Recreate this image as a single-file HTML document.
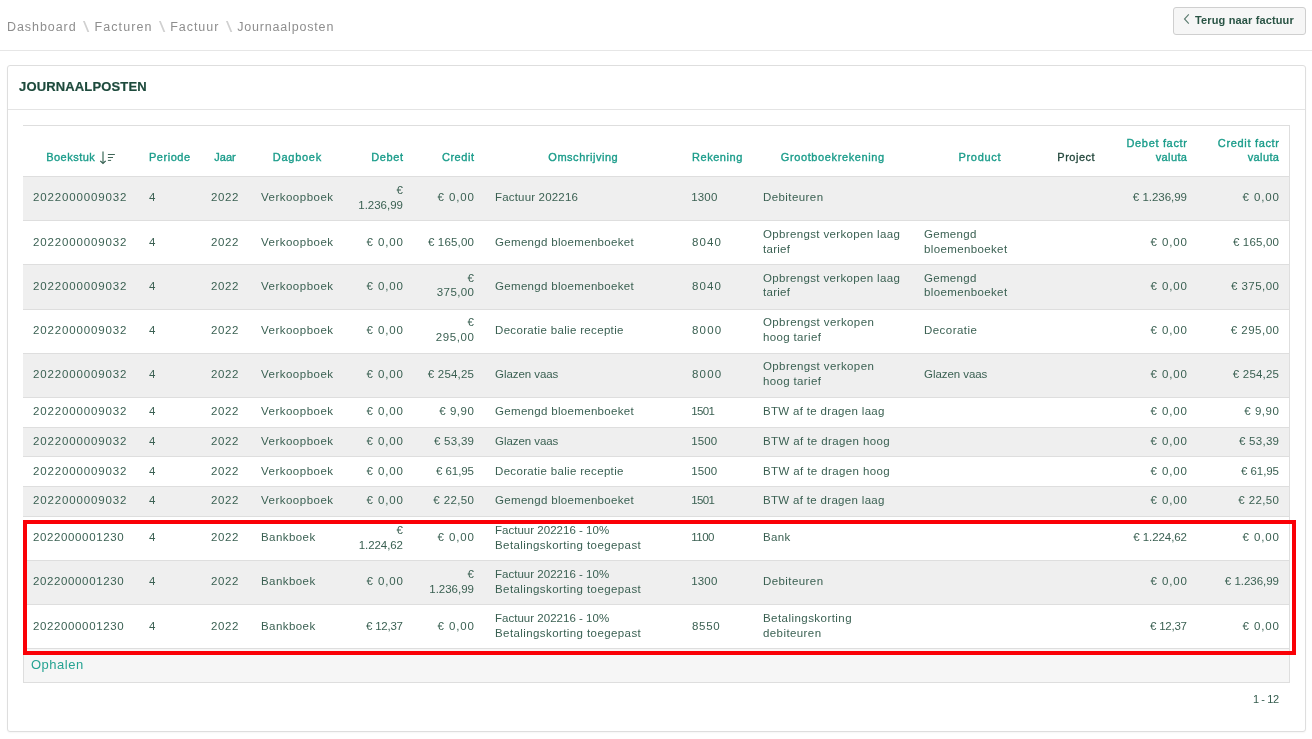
<!DOCTYPE html>
<html lang="nl">
<head>
<meta charset="utf-8">
<title>Journaalposten</title>
<style>
*{box-sizing:border-box;margin:0;padding:0}
html,body{width:1312px;height:739px;overflow:hidden;background:#fff}
body{will-change:transform;font-family:"Liberation Sans",sans-serif;font-size:11.5px;color:#3a6052;position:relative}
span{display:inline-block;white-space:nowrap}
.topbar{position:absolute;left:0;top:0;width:1312px;height:51px;border-bottom:1px solid #e6e6e6;background:#fff}
.crumbs{position:absolute;left:7px;top:17px;height:18px;line-height:18px;font-size:12.5px;color:#8e8e8e;white-space:nowrap}
.crumbs .sep{color:#d0d0d0;margin:0 6.5px 0 8.2px;font-size:15px;transform:scaleX(1.5);position:relative;top:.5px}
.btn{position:absolute;left:1173px;top:7px;width:133px;height:28px;border:1px solid #cfcfcf;border-radius:3px;background:#f6f6f6;color:#2a5445;font-weight:bold;font-size:11px;line-height:26px;white-space:nowrap}
.btn svg{position:absolute;left:9px;top:6px}
.btn b{position:absolute;left:21px;top:-1px}
.panel{position:absolute;left:7px;top:65px;width:1299px;height:667px;border:1px solid #dedede;border-radius:3px;background:#fff;box-shadow:0 1px 2px rgba(0,0,0,.04)}
.panel h1{position:absolute;left:0;top:0;width:1297px;height:44px;border-bottom:1px solid #e4e4e4;font-size:13px;font-weight:bold;color:#1d4a3c;line-height:42px;padding-left:11px;-webkit-text-stroke:.2px #1d4a3c}
.grid{position:absolute;left:23px;top:125px;width:1267px;border-top:1px solid #dedede;border-right:1px solid #dedede}
table{border-collapse:separate;border-spacing:0;table-layout:fixed;width:1266px}
th,td{padding:0 10px;vertical-align:middle;text-align:left;line-height:14.2px;white-space:nowrap;overflow:hidden;border-bottom:1px solid #dedede;font-weight:normal}
th{color:#1a9c8a;text-align:center;vertical-align:bottom;padding-bottom:12px;line-height:14px;font-size:11px;-webkit-text-stroke:.35px #1a9c8a}
th.r,td.r{text-align:right}
th.c1{padding-right:12px}
th.dark{color:#21453a;-webkit-text-stroke:.3px #21453a}
td.o{padding-left:11px}
td.k{padding-left:9.2px}
td div,th div{position:relative;top:0px}
tr.u td div{top:-1px}
td div.m{margin:-1px 0 1px}
tr.n td div.m{margin:0}
tr.g td{background:#efefef}
tr.h{height:51px}
tr.d{height:44px}
tr.s{height:30px}
tr.x{height:45px}
tr.y{height:29px}
.sort{overflow:visible;vertical-align:-3px;margin-left:4.6px;margin-right:-1.6px}
.foot{height:34px;background:#f6f6f6;border-left:1px solid #dedede;border-bottom:1px solid #dedede;color:#26a392;font-size:13px;line-height:32px;padding-left:7px}
.pager{position:absolute;left:1201px;top:692px;width:78px;text-align:right;font-size:11px;line-height:14px;color:#355c4e}
.mark{position:absolute;left:23px;top:520px;width:1273px;height:135px;border:4px solid #fa0006}
</style>
</head>
<body>
<div class="topbar">
<div class="crumbs"><span style="letter-spacing:0.94px;margin-right:-0.94px">Dashboard</span><span class="sep">\</span><span style="letter-spacing:1.07px;margin-right:-1.07px">Facturen</span><span class="sep">\</span><span style="letter-spacing:0.95px;margin-right:-0.95px">Factuur</span><span class="sep">\</span><span style="letter-spacing:0.82px;margin-right:-0.82px">Journaalposten</span></div>
<div class="btn"><svg width="8" height="12" viewBox="0 0 8 12"><path d="M5.8 0.4L1.5 5L5.8 9.6" fill="none" stroke="#5c7c70" stroke-width="1.1"/></svg><b><span style="letter-spacing:0.14px;margin-right:-0.14px">Terug naar factuur</span></b></div>
</div>
<div class="panel"><h1><span style="letter-spacing:0.15px;margin-right:-0.15px">JOURNAALPOSTEN</span></h1></div>
<div class="grid">
<table>
<colgroup><col style="width:116px"><col style="width:62px"><col style="width:50px"><col style="width:92px"><col style="width:70px"><col style="width:71px"><col style="width:198px"><col style="width:71px"><col style="width:161px"><col style="width:133px"><col style="width:58px"><col style="width:92px"><col style="width:92px"></colgroup>
<thead>
<tr class="h"><th class="b"><div><span style="letter-spacing:0.5px;margin-right:-0.5px">Boekstuk</span><svg class="sort" width="18" height="15" viewBox="0 0 18 15"><path d="M4 2.6V14" stroke="#8aa69b" stroke-width="2" fill="none"/><path d="M1.3 11.9L4 14.5L6.7 11.9" stroke="#2f5b4c" stroke-width="1.2" fill="none"/><path d="M8.9 5.5H15.9M8.9 8.5H14M8.9 11.4H12.1" stroke="#3f6557" stroke-width="1" fill="none"/></svg></div></th><th class="c1"><div><span style="letter-spacing:0.53px;margin-right:-0.53px">Periode</span></div></th><th class="c1"><div><span style="letter-spacing:0.03px;margin-right:-0.03px">Jaar</span></div></th><th><div><span style="letter-spacing:0.72px;margin-right:-0.72px">Dagboek</span></div></th><th class="r"><div><span style="letter-spacing:0.62px;margin-right:-0.62px">Debet</span></div></th><th class="r"><div><span style="letter-spacing:0.54px;margin-right:-0.54px">Credit</span></div></th><th><div><span style="letter-spacing:0.52px;margin-right:-0.52px">Omschrijving</span></div></th><th class="c1"><div><span style="letter-spacing:0.54px;margin-right:-0.54px">Rekening</span></div></th><th class="c1"><div><span style="letter-spacing:0.62px;margin-right:-0.62px">Grootboekrekening</span></div></th><th class="c1"><div><span style="letter-spacing:0.68px;margin-right:-0.68px">Product</span></div></th><th class="dark"><div><span style="letter-spacing:0.52px;margin-right:-0.52px">Project</span></div></th><th class="r"><div><span style="letter-spacing:0.67px;margin-right:-0.67px">Debet factr</span><br><span style="letter-spacing:0.4px;margin-right:-0.4px">valuta</span></div></th><th class="r"><div><span style="letter-spacing:0.67px;margin-right:-0.67px">Credit factr</span><br><span style="letter-spacing:0.4px;margin-right:-0.4px">valuta</span></div></th></tr>
</thead>
<tbody>
<tr class="d g u n"><td><div><span style="letter-spacing:0.86px;margin-right:-0.86px">2022000009032</span></div></td><td><div><span>4</span></div></td><td><div><span style="letter-spacing:0.57px;margin-right:-0.57px">2022</span></div></td><td><div><span style="letter-spacing:0.49px;margin-right:-0.49px">Verkoopboek</span></div></td><td class="r"><div class="m"><span>€</span><br><span>1.236,99</span></div></td><td class="r"><div><span style="letter-spacing:0.88px;margin-right:-0.88px">€ 0,00</span></div></td><td class="o"><div><span style="letter-spacing:0.18px;margin-right:-0.18px">Factuur 202216</span></div></td><td class="k"><div><span style="letter-spacing:0.17px;margin-right:-0.17px">1300</span></div></td><td><div><span style="letter-spacing:0.42px;margin-right:-0.42px">Debiteuren</span></div></td><td></td><td></td><td class="r"><div><span style="letter-spacing:-0.02px;margin-right:0.02px">€ 1.236,99</span></div></td><td class="r"><div><span style="letter-spacing:0.88px;margin-right:-0.88px">€ 0,00</span></div></td></tr>
<tr class="d"><td><div><span style="letter-spacing:0.86px;margin-right:-0.86px">2022000009032</span></div></td><td><div><span>4</span></div></td><td><div><span style="letter-spacing:0.57px;margin-right:-0.57px">2022</span></div></td><td><div><span style="letter-spacing:0.49px;margin-right:-0.49px">Verkoopboek</span></div></td><td class="r"><div><span style="letter-spacing:0.88px;margin-right:-0.88px">€ 0,00</span></div></td><td class="r"><div><span style="letter-spacing:0.19px;margin-right:-0.19px">€ 165,00</span></div></td><td class="o"><div><span style="letter-spacing:0.32px;margin-right:-0.32px">Gemengd bloemenboeket</span></div></td><td><div><span style="letter-spacing:1.13px;margin-right:-1.13px">8040</span></div></td><td><div class="m"><span style="letter-spacing:0.35px;margin-right:-0.35px">Opbrengst verkopen laag</span><br><span style="letter-spacing:0.28px;margin-right:-0.28px">tarief</span></div></td><td><div class="m"><span style="letter-spacing:0.3px;margin-right:-0.3px">Gemengd</span><br><span style="letter-spacing:0.37px;margin-right:-0.37px">bloemenboeket</span></div></td><td></td><td class="r"><div><span style="letter-spacing:0.88px;margin-right:-0.88px">€ 0,00</span></div></td><td class="r"><div><span style="letter-spacing:0.19px;margin-right:-0.19px">€ 165,00</span></div></td></tr>
<tr class="d g x u"><td><div><span style="letter-spacing:0.86px;margin-right:-0.86px">2022000009032</span></div></td><td><div><span>4</span></div></td><td><div><span style="letter-spacing:0.57px;margin-right:-0.57px">2022</span></div></td><td><div><span style="letter-spacing:0.49px;margin-right:-0.49px">Verkoopboek</span></div></td><td class="r"><div><span style="letter-spacing:0.88px;margin-right:-0.88px">€ 0,00</span></div></td><td class="r"><div class="m"><span>€</span><br><span style="letter-spacing:0.4px;margin-right:-0.4px">375,00</span></div></td><td class="o"><div><span style="letter-spacing:0.32px;margin-right:-0.32px">Gemengd bloemenboeket</span></div></td><td><div><span style="letter-spacing:1.13px;margin-right:-1.13px">8040</span></div></td><td><div class="m"><span style="letter-spacing:0.35px;margin-right:-0.35px">Opbrengst verkopen laag</span><br><span style="letter-spacing:0.28px;margin-right:-0.28px">tarief</span></div></td><td><div class="m"><span style="letter-spacing:0.3px;margin-right:-0.3px">Gemengd</span><br><span style="letter-spacing:0.37px;margin-right:-0.37px">bloemenboeket</span></div></td><td></td><td class="r"><div><span style="letter-spacing:0.88px;margin-right:-0.88px">€ 0,00</span></div></td><td class="r"><div><span style="letter-spacing:0.47px;margin-right:-0.47px">€ 375,00</span></div></td></tr>
<tr class="d u"><td><div><span style="letter-spacing:0.86px;margin-right:-0.86px">2022000009032</span></div></td><td><div><span>4</span></div></td><td><div><span style="letter-spacing:0.57px;margin-right:-0.57px">2022</span></div></td><td><div><span style="letter-spacing:0.49px;margin-right:-0.49px">Verkoopboek</span></div></td><td class="r"><div><span style="letter-spacing:0.88px;margin-right:-0.88px">€ 0,00</span></div></td><td class="r"><div class="m"><span>€</span><br><span style="letter-spacing:0.62px;margin-right:-0.62px">295,00</span></div></td><td class="o"><div><span style="letter-spacing:0.33px;margin-right:-0.33px">Decoratie balie receptie</span></div></td><td><div><span style="letter-spacing:1.2px;margin-right:-1.2px">8000</span></div></td><td><div class="m"><span style="letter-spacing:0.39px;margin-right:-0.39px">Opbrengst verkopen</span><br><span style="letter-spacing:0.35px;margin-right:-0.35px">hoog tarief</span></div></td><td><div><span style="letter-spacing:0.45px;margin-right:-0.45px">Decoratie</span></div></td><td></td><td class="r"><div><span style="letter-spacing:0.88px;margin-right:-0.88px">€ 0,00</span></div></td><td class="r"><div><span style="letter-spacing:0.51px;margin-right:-0.51px">€ 295,00</span></div></td></tr>
<tr class="d g u"><td><div><span style="letter-spacing:0.86px;margin-right:-0.86px">2022000009032</span></div></td><td><div><span>4</span></div></td><td><div><span style="letter-spacing:0.57px;margin-right:-0.57px">2022</span></div></td><td><div><span style="letter-spacing:0.49px;margin-right:-0.49px">Verkoopboek</span></div></td><td class="r"><div><span style="letter-spacing:0.88px;margin-right:-0.88px">€ 0,00</span></div></td><td class="r"><div><span style="letter-spacing:0.2px;margin-right:-0.2px">€ 254,25</span></div></td><td class="o"><div><span style="letter-spacing:-0.06px;margin-right:0.06px">Glazen vaas</span></div></td><td><div><span style="letter-spacing:1.2px;margin-right:-1.2px">8000</span></div></td><td><div class="m"><span style="letter-spacing:0.39px;margin-right:-0.39px">Opbrengst verkopen</span><br><span style="letter-spacing:0.35px;margin-right:-0.35px">hoog tarief</span></div></td><td><div><span style="letter-spacing:-0.06px;margin-right:0.06px">Glazen vaas</span></div></td><td></td><td class="r"><div><span style="letter-spacing:0.88px;margin-right:-0.88px">€ 0,00</span></div></td><td class="r"><div><span style="letter-spacing:0.2px;margin-right:-0.2px">€ 254,25</span></div></td></tr>
<tr class="s u"><td><div><span style="letter-spacing:0.86px;margin-right:-0.86px">2022000009032</span></div></td><td><div><span>4</span></div></td><td><div><span style="letter-spacing:0.57px;margin-right:-0.57px">2022</span></div></td><td><div><span style="letter-spacing:0.49px;margin-right:-0.49px">Verkoopboek</span></div></td><td class="r"><div><span style="letter-spacing:0.88px;margin-right:-0.88px">€ 0,00</span></div></td><td class="r"><div><span style="letter-spacing:0.56px;margin-right:-0.56px">€ 9,90</span></div></td><td class="o"><div><span style="letter-spacing:0.32px;margin-right:-0.32px">Gemengd bloemenboeket</span></div></td><td class="k"><div><span style="letter-spacing:-0.6px;margin-right:0.6px">1501</span></div></td><td><div><span style="letter-spacing:0.32px;margin-right:-0.32px">BTW af te dragen laag</span></div></td><td></td><td></td><td class="r"><div><span style="letter-spacing:0.88px;margin-right:-0.88px">€ 0,00</span></div></td><td class="r"><div><span style="letter-spacing:0.56px;margin-right:-0.56px">€ 9,90</span></div></td></tr>
<tr class="s g y u"><td><div><span style="letter-spacing:0.86px;margin-right:-0.86px">2022000009032</span></div></td><td><div><span>4</span></div></td><td><div><span style="letter-spacing:0.57px;margin-right:-0.57px">2022</span></div></td><td><div><span style="letter-spacing:0.49px;margin-right:-0.49px">Verkoopboek</span></div></td><td class="r"><div><span style="letter-spacing:0.88px;margin-right:-0.88px">€ 0,00</span></div></td><td class="r"><div><span style="letter-spacing:0.28px;margin-right:-0.28px">€ 53,39</span></div></td><td class="o"><div><span style="letter-spacing:-0.06px;margin-right:0.06px">Glazen vaas</span></div></td><td class="k"><div><span style="letter-spacing:0.1px;margin-right:-0.1px">1500</span></div></td><td><div><span style="letter-spacing:0.39px;margin-right:-0.39px">BTW af te dragen hoog</span></div></td><td></td><td></td><td class="r"><div><span style="letter-spacing:0.88px;margin-right:-0.88px">€ 0,00</span></div></td><td class="r"><div><span style="letter-spacing:0.28px;margin-right:-0.28px">€ 53,39</span></div></td></tr>
<tr class="s"><td><div><span style="letter-spacing:0.86px;margin-right:-0.86px">2022000009032</span></div></td><td><div><span>4</span></div></td><td><div><span style="letter-spacing:0.57px;margin-right:-0.57px">2022</span></div></td><td><div><span style="letter-spacing:0.49px;margin-right:-0.49px">Verkoopboek</span></div></td><td class="r"><div><span style="letter-spacing:0.88px;margin-right:-0.88px">€ 0,00</span></div></td><td class="r"><div><span style="letter-spacing:-0.07px;margin-right:0.07px">€ 61,95</span></div></td><td class="o"><div><span style="letter-spacing:0.33px;margin-right:-0.33px">Decoratie balie receptie</span></div></td><td class="k"><div><span style="letter-spacing:0.1px;margin-right:-0.1px">1500</span></div></td><td><div><span style="letter-spacing:0.39px;margin-right:-0.39px">BTW af te dragen hoog</span></div></td><td></td><td></td><td class="r"><div><span style="letter-spacing:0.88px;margin-right:-0.88px">€ 0,00</span></div></td><td class="r"><div><span style="letter-spacing:-0.07px;margin-right:0.07px">€ 61,95</span></div></td></tr>
<tr class="s g u"><td><div><span style="letter-spacing:0.86px;margin-right:-0.86px">2022000009032</span></div></td><td><div><span>4</span></div></td><td><div><span style="letter-spacing:0.57px;margin-right:-0.57px">2022</span></div></td><td><div><span style="letter-spacing:0.49px;margin-right:-0.49px">Verkoopboek</span></div></td><td class="r"><div><span style="letter-spacing:0.88px;margin-right:-0.88px">€ 0,00</span></div></td><td class="r"><div><span style="letter-spacing:0.38px;margin-right:-0.38px">€ 22,50</span></div></td><td class="o"><div><span style="letter-spacing:0.32px;margin-right:-0.32px">Gemengd bloemenboeket</span></div></td><td class="k"><div><span style="letter-spacing:-0.6px;margin-right:0.6px">1501</span></div></td><td><div><span style="letter-spacing:0.32px;margin-right:-0.32px">BTW af te dragen laag</span></div></td><td></td><td></td><td class="r"><div><span style="letter-spacing:0.88px;margin-right:-0.88px">€ 0,00</span></div></td><td class="r"><div><span style="letter-spacing:0.38px;margin-right:-0.38px">€ 22,50</span></div></td></tr>
<tr class="d u n"><td><div><span style="letter-spacing:0.62px;margin-right:-0.62px">2022000001230</span></div></td><td><div><span>4</span></div></td><td><div><span style="letter-spacing:0.57px;margin-right:-0.57px">2022</span></div></td><td><div><span style="letter-spacing:0.43px;margin-right:-0.43px">Bankboek</span></div></td><td class="r"><div class="m"><span>€</span><br><span style="letter-spacing:-0.06px;margin-right:0.06px">1.224,62</span></div></td><td class="r"><div><span style="letter-spacing:0.88px;margin-right:-0.88px">€ 0,00</span></div></td><td class="o"><div class="m"><span style="letter-spacing:0.02px;margin-right:-0.02px">Factuur 202216 - 10%</span><br><span style="letter-spacing:0.41px;margin-right:-0.41px">Betalingskorting toegepast</span></div></td><td class="k"><div><span style="letter-spacing:-0.5px;margin-right:0.5px">1100</span></div></td><td><div><span style="letter-spacing:0.37px;margin-right:-0.37px">Bank</span></div></td><td></td><td></td><td class="r"><div><span style="letter-spacing:-0.08px;margin-right:0.08px">€ 1.224,62</span></div></td><td class="r"><div><span style="letter-spacing:0.88px;margin-right:-0.88px">€ 0,00</span></div></td></tr>
<tr class="d g u n"><td><div><span style="letter-spacing:0.62px;margin-right:-0.62px">2022000001230</span></div></td><td><div><span>4</span></div></td><td><div><span style="letter-spacing:0.57px;margin-right:-0.57px">2022</span></div></td><td><div><span style="letter-spacing:0.43px;margin-right:-0.43px">Bankboek</span></div></td><td class="r"><div><span style="letter-spacing:0.88px;margin-right:-0.88px">€ 0,00</span></div></td><td class="r"><div class="m"><span>€</span><br><span>1.236,99</span></div></td><td class="o"><div class="m"><span style="letter-spacing:0.02px;margin-right:-0.02px">Factuur 202216 - 10%</span><br><span style="letter-spacing:0.41px;margin-right:-0.41px">Betalingskorting toegepast</span></div></td><td class="k"><div><span style="letter-spacing:0.17px;margin-right:-0.17px">1300</span></div></td><td><div><span style="letter-spacing:0.42px;margin-right:-0.42px">Debiteuren</span></div></td><td></td><td></td><td class="r"><div><span style="letter-spacing:0.88px;margin-right:-0.88px">€ 0,00</span></div></td><td class="r"><div><span style="letter-spacing:-0.02px;margin-right:0.02px">€ 1.236,99</span></div></td></tr>
<tr class="d"><td><div><span style="letter-spacing:0.62px;margin-right:-0.62px">2022000001230</span></div></td><td><div><span>4</span></div></td><td><div><span style="letter-spacing:0.57px;margin-right:-0.57px">2022</span></div></td><td><div><span style="letter-spacing:0.43px;margin-right:-0.43px">Bankboek</span></div></td><td class="r"><div><span style="letter-spacing:-0.23px;margin-right:0.23px">€ 12,37</span></div></td><td class="r"><div><span style="letter-spacing:0.88px;margin-right:-0.88px">€ 0,00</span></div></td><td class="o"><div class="m"><span style="letter-spacing:0.02px;margin-right:-0.02px">Factuur 202216 - 10%</span><br><span style="letter-spacing:0.41px;margin-right:-0.41px">Betalingskorting toegepast</span></div></td><td><div><span style="letter-spacing:0.67px;margin-right:-0.67px">8550</span></div></td><td><div class="m"><span style="letter-spacing:0.45px;margin-right:-0.45px">Betalingskorting</span><br><span style="letter-spacing:0.41px;margin-right:-0.41px">debiteuren</span></div></td><td></td><td></td><td class="r"><div><span style="letter-spacing:-0.23px;margin-right:0.23px">€ 12,37</span></div></td><td class="r"><div><span style="letter-spacing:0.88px;margin-right:-0.88px">€ 0,00</span></div></td></tr>
</tbody>
</table>
<div class="foot"><span style="letter-spacing:0.5px;margin-right:-0.5px">Ophalen</span></div>
</div>
<div class="pager"><span style="letter-spacing:-0.4px;margin-right:0.4px">1 - 12</span></div>
<div class="mark"></div>
</body>
</html>
